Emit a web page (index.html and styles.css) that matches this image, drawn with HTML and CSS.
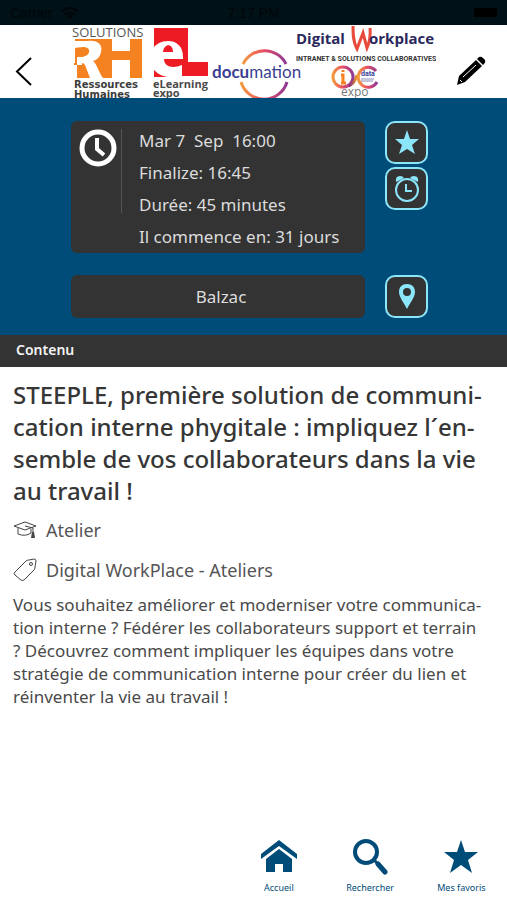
FILE: index.html
```html
<!DOCTYPE html>
<html lang="fr">

<head>
  <meta charset="UTF-8">
  <meta name="viewport" content="width=device-width, initial-scale=1.0">
  <title>Contenu</title>
  <link rel="stylesheet" href="styles.css">
</head>

<body>
  <div class="status-bar">
    <span class="carrier">Carrier
      <svg width="18" height="12" viewBox="0 0 18 12"><path d="M1 4.500Q9-2.500 17 4.500M4 7.500Q9 3.500 14 7.500" fill="none" stroke="currentColor" stroke-width="2"/><path d="M6 9Q9 7 12 9L9 12Z" fill="currentColor"/></svg>
    </span>
    <span>7:17 PM</span>
    <span class="battery"></span>
  </div>

  <header class="header">
    <button class="header-button back" aria-label="Retour">
      <svg width="20" height="30" viewBox="0 0 20 30"><path d="M17 2L3 15.500L17 29" fill="none" stroke="#000" stroke-width="2"/></svg>
    </button>
    <svg class="banner" width="364" height="73" viewBox="0 0 364 73" role="img" aria-label="Salons">
      <defs>
        <linearGradient id="ring"><stop offset="0" stop-color="#f39a3d"/><stop offset="0.5" stop-color="#e84b65"/><stop offset="1" stop-color="#8e3a94"/></linearGradient>
        <linearGradient id="ring2"><stop offset="0" stop-color="#7b2b88"/><stop offset="1" stop-color="#f59a23"/></linearGradient>
      </defs>
      <!-- Solutions RH -->
      <text x="0" y="12" class="logo-light" font-size="13">SOLUTIONS</text>
      <path d="M3 14H70V53H3Z" fill="#f58220"/>
      <path d="M2 16H16C26 15 31 20 29 27C28 32 25 35 21 36C25 39 26 46 31 53H18L13 40Q12 38 10 38V53H3V40H5V32H9C18 32 21 22 11 22L2 23Z" fill="#fff"/>
      <path d="M2 38H5V53H10V40H2Z" fill="#f58220"/>
      <path d="M40 14H58V26H40ZM40 35H58V53H40Z" fill="#fff"/>
      <text x="2" y="63" class="logo-wide" font-size="10">Ressources</text>
      <text x="2" y="73" class="logo-wide" font-size="10">Humaines</text>
      <!-- eLearning expo -->
      <path d="M82 3H116V37H136V51H82Z" fill="#ed1c24"/>
      <path d="M81 24C85 14 111 10 111 32V34H92C92 42 101 44 110 40V51H81ZM91 27H101C101 18 92 18 91 27Z" fill="#fff" fill-rule="evenodd"/>
      <path d="M82 45C88 51 93 52 98 52H82Z" fill="#ed1c24"/>
      <text x="81" y="63" class="logo-bold" font-size="11">eLearning</text>
      <text x="81" y="72" class="logo-bold" font-size="11">expo</text>
      <!-- Documation -->
      <g fill="none" stroke="url(#ring)" stroke-width="3"><path d="M171 39A24 24 0 0 1 214 39"/><path d="M169 57A24 24 0 0 0 215 57"/></g>
      <text x="140" y="53" class="logo-docu" font-size="17"><tspan class="logo-strong">docu</tspan>mation</text>
      <!-- Digital Workplace -->
      <text x="224" y="19" class="logo-digital" font-size="15">Digital</text>
      <path d="M281 1C281 9 281 17 285 24L291 8L295 23Q299 14 298 3" fill="none" stroke="#e84b3c" stroke-width="3"/>
      <text x="297" y="19" class="logo-digital" font-size="15">orkplace</text>
      <text x="224" y="36" class="logo-tag" font-size="7">INTRANET &amp; SOLUTIONS COLLABORATIVES</text>
      <circle cx="271" cy="52" r="10" fill="none" stroke="url(#ring)" stroke-width="3"/>
      <path d="M304 46A10 10 0 1 0 305 57" fill="none" stroke="url(#ring)" stroke-width="3"/>
      <path d="M277 61Q283 58 285 50" fill="none" stroke="url(#ring2)" stroke-width="3"/>
      <path d="M271 45V47M269 50H271V58M269 58H274" fill="none" stroke="#f58220" stroke-width="3"/>
      <text x="289" y="51" class="logo-data" font-size="7">data</text>
      <path d="M289 54H302M289 56H301" stroke="#8a8ab8"/>
      <text x="269" y="71" class="logo-expo" font-size="12">expo</text>
    </svg>
    <button class="header-button edit" aria-label="Modifier">
      <svg width="30" height="30" viewBox="0 0 30 30"><path d="M1 29L3 20L20 4L26 10L9 26ZM21 3L23 1Q25 0 27 2L29 4Q30 6 28 8L27 9Z"/><path d="M7 21L20 9M4 24L6 26" stroke="#fff" stroke-width="1"/></svg>
    </button>
  </header>

  <section class="session">
    <div class="card times">
      <svg class="clock" width="38" height="38" viewBox="0 0 38 38" fill="none" stroke="#fff"><circle cx="19" cy="19" r="16" stroke-width="5"/><path d="M18 9V20L25 26" stroke-width="4"/></svg>
      <ul class="time-list">
        <li>Mar 7&nbsp; Sep&nbsp; 16:00</li>
        <li>Finalize: 16:45</li>
        <li>Durée: 45 minutes</li>
        <li>Il commence en: 31 jours</li>
      </ul>
    </div>
    <div class="actions">
      <button class="icon-button" aria-label="Ajouter aux favoris">
        <svg width="26" height="26" viewBox="0 0 26 26"><path d="M13 0L16 9H25L18 15L21 24L13 19L5 24L8 15L1 9H10Z" fill="currentColor"/></svg>
      </button>
      <button class="icon-button" aria-label="Rappel">
        <svg width="26" height="28" viewBox="0 0 26 28" fill="none" stroke="currentColor"><circle cx="13" cy="15" r="11" stroke-width="2"/><path d="M12 9V16H18" stroke-width="2"/><path d="M2 7Q1 1 6 1Q9 1 10 3ZM24 7Q25 1 20 1Q17 1 16 3Z" fill="currentColor" stroke="none"/></svg>
      </button>
    </div>
    <div class="card room">Balzac</div>
    <button class="icon-button" aria-label="Voir le plan">
      <svg width="18" height="27" viewBox="0 0 18 27"><path d="M9 1C4 1 1 4 1 9C1 14 6 20 9 26C12 20 17 14 17 9C17 4 14 1 9 1ZM9 5A4 4 0 1 1 9 13A4 4 0 1 1 9 5Z" fill="currentColor" fill-rule="evenodd"/></svg>
    </button>
  </section>

  <h2 class="section-title">Contenu</h2>

  <main class="content">
    <h1>STEEPLE, première solution de communi&shy;cation interne phygitale : impliquez l´en&shy;semble de vos collaborateurs dans la vie au travail !</h1>
    <div class="meta">
      <svg width="24" height="18" viewBox="0 0 24 18" fill="none" stroke="#444"><path d="M1 5L12 1L23 5L12 9ZM5 7V13Q12 16 18 12V8M12 5L20 7V12"/><path d="M19 11H21L22 17H18Z" fill="#444" stroke="none"/></svg>
      Atelier
    </div>
    <div class="meta">
      <svg width="24" height="24" viewBox="0 0 24 24" fill="none" stroke="#444"><path d="M2 14L13 3Q14 2 16 2L21 1Q23 1 23 3L22 9Q22 11 21 12L11 22Q9 23 8 22L2 17Q0 15 2 14Z"/><circle cx="18" cy="6" r="1.500"/></svg>
      Digital WorkPlace - Ateliers
    </div>
    <p>Vous souhaitez améliorer et moderniser votre communica&shy;tion interne ? Fédérer les collaborateurs support et terrain ? Découvrez comment impliquer les équipes dans votre stratégie de communication interne pour créer du lien et réinventer la vie au travail !</p>
  </main>

  <nav class="tab-bar">
    <a href="#" class="tab">
      <svg width="36" height="36" viewBox="0 0 36 36" fill="currentColor"><path d="M0 15L18 1L36 15V20L18 7L0 20Z"/><path d="M5 20L18 10L31 20V33H22V25H14V33H5Z"/></svg>
      Accueil
    </a>
    <a href="#" class="tab">
      <svg width="36" height="36" viewBox="0 0 36 36" fill="none" stroke="currentColor"><circle cx="14" cy="13" r="11" stroke-width="4"/><path d="M22 21L25 24" stroke-width="3"/><path d="M26 25L33 33" stroke-width="5" stroke-linecap="round"/></svg>
      Rechercher
    </a>
    <a href="#" class="tab">
      <svg width="36" height="36" viewBox="0 0 36 36" fill="currentColor"><path d="M18 1L22 13H35L25 21L29 34L18 26L7 34L11 21L1 13H14Z"/></svg>
      Mes favoris
    </a>
  </nav>
</body>

</html>
```
FILE: styles.css
```css
body {
  margin: 0;
  min-height: 100vh;
  display: flex;
  flex-direction: column;
  background-color: #fff;
  color: #363636;
  font-family: "Noto Sans", sans-serif;
}

button {
  border: 0;
  padding: 0;
  background: none;
  cursor: pointer;
}

svg {
  display: block;
  flex-shrink: 0;
}

.status-bar {
  display: grid;
  grid-template-columns: 1fr auto 1fr;
  align-items: center;
  height: 25px;
  padding: 0 10px;
  background-color: #001117;
  color: #020608;
  font-family: "Liberation Sans", sans-serif;
  font-size: 14px;
}

.carrier {
  display: flex;
  align-items: center;
  gap: 8px;
}

.battery {
  justify-self: end;
  width: 23px;
  height: 9px;
  background-color: #000;
}

.header {
  display: grid;
  grid-template-columns: 1fr auto 1fr;
  align-items: center;
  height: 73px;
  overflow: hidden;
}

.header-button {
  padding-top: 18px;
}

.back {
  justify-self: start;
  margin-left: 14px;
}

.edit {
  justify-self: end;
  margin-right: 21px;
}

/* logos */
.logo-light {
  fill: #555;
  font-family: "Open Sans", sans-serif;
}

.logo-bold {
  fill: #4a4a4a;
  font-family: "Open Sans", sans-serif;
  font-weight: 700;
}

.logo-wide {
  fill: #3c3c3c;
  font-family: "DejaVu Sans", sans-serif;
  font-weight: 700;
}

.logo-docu {
  fill: #3b3f92;
  font-family: Lato, sans-serif;
}

.logo-strong {
  font-weight: 700;
}

.logo-digital {
  fill: #2a285c;
  font-family: "Open Sans", sans-serif;
  font-weight: 700;
}

.logo-tag {
  fill: #333;
  font-family: Roboto, sans-serif;
  font-weight: 700;
}

.logo-data {
  fill: #3c3c98;
  font-family: Roboto, sans-serif;
  font-weight: 700;
}

.logo-expo {
  fill: #777;
  font-family: "Open Sans", sans-serif;
}

.session {
  display: grid;
  grid-template-columns: 1fr 43px;
  gap: 22px 20px;
  padding: 23px 79px 17px 71px;
  background-color: #004c78;
}

.card {
  background-color: #333;
  border-radius: 6px;
  color: #dcdcdc;
  font-size: 17px;
}

.times {
  display: flex;
  padding: 4px 8px 0;
}

.clock {
  margin-top: 4px;
}

.time-list {
  margin: 0 0 0 4px;
  padding: 0 0 0 18px;
  list-style: none;
  line-height: 32px;
  background: linear-gradient(#555, #555) left 4px / 1px 84px no-repeat;
}

.room {
  display: flex;
  align-items: center;
  justify-content: center;
  padding-left: 6px;
}

.actions {
  display: flex;
  flex-direction: column;
  gap: 3px;
}

.icon-button {
  display: flex;
  align-items: center;
  justify-content: center;
  height: 43px;
  width: 43px;
  box-sizing: border-box;
  border: 2px solid #8ce6fa;
  border-radius: 10px;
  background-color: #333;
  color: #8ce6fa;
}

.section-title {
  margin: 0;
  padding: 0 16px 2px;
  background-color: #333;
  color: #f4f4f4;
  font-size: 14px;
  font-weight: 600;
  line-height: 30px;
}

.content {
  flex: 1;
  padding: 12px 20px 12px 13px;
}

.content h1 {
  margin: 0 0 11px;
  font-size: 24px;
  font-weight: 500;
  line-height: 32px;
}

.meta {
  display: flex;
  align-items: center;
  gap: 9px;
  margin-bottom: 16px;
  color: #555;
  font-size: 18px;
  line-height: 24px;
}

.content p {
  margin: -5px 0 0;
  color: #4a4a4a;
  font-size: 17px;
  line-height: 23px;
}

.tab-bar {
  display: flex;
  justify-content: flex-end;
  padding-bottom: 4px;
}

.tab {
  display: flex;
  flex-direction: column;
  align-items: center;
  gap: 5px;
  width: 18%;
  color: #004c78;
  font-size: 9px;
  line-height: 16px;
  text-decoration: none;
}
```
